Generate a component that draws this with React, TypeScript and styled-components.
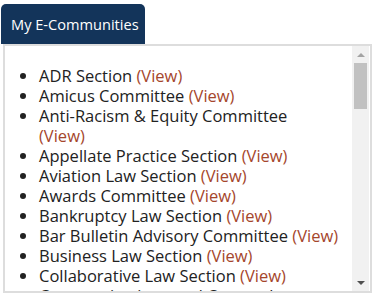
import React from "react";
import styled, {createGlobalStyle} from "styled-components";

type Community = {
    name: string
    viewOnNewLine?: boolean
}

const communities: Community[] = [
    {name: "ADR Section"},
    {name: "Amicus Committee"},
    {name: "Anti-Racism & Equity Committee", viewOnNewLine: true},
    {name: "Appellate Practice Section"},
    {name: "Aviation Law Section"},
    {name: "Awards Committee"},
    {name: "Bankruptcy Law Section"},
    {name: "Bar Bulletin Advisory Committee"},
    {name: "Business Law Section"},
    {name: "Collaborative Law Section"},
    {name: "Communications and Outreach Committee"},
    {name: "Construction Law Section"},
]

export default function App() {
    return (
        <>
            <GlobalStyle />
            <Wrapper>
                <Tab>My E-Communities</Tab>
                <Panel>
                    <ListArea>
                        <List>
                            {communities.map((c) => (
                                <Item key={c.name}>
                                    {c.name} <ViewLink href="#" $block={c.viewOnNewLine}>(View)</ViewLink>
                                </Item>
                            ))}
                        </List>
                    </ListArea>
                    <ScrollBar>
                        <Arrow up />
                        <Track>
                            <Thumb />
                        </Track>
                        <Arrow />
                    </ScrollBar>
                </Panel>
            </Wrapper>
        </>
    )
}

const GlobalStyle = createGlobalStyle`
  body {
    margin: 0;
    background: #fff;
    font-family: "Open Sans", "Liberation Sans", sans-serif;
  }
`

const Wrapper = styled.div`
  padding-top: 4px;
  width: 374px;
`

const Tab = styled.div`
  margin-left: 1px;
  width: 144px;
  height: 40px;
  box-sizing: border-box;
  padding: 10px 0 0 10px;
  background: #13345a;
  border-radius: 5px 5px 0 0;
  color: #fff;
  font-size: 14.6px;
  line-height: 20px;
`

const Panel = styled.div`
  margin-left: 3px;
  width: 369px;
  height: 249px;
  box-sizing: border-box;
  border: 2px solid #ddd;
  display: flex;
  overflow: hidden;
`

const ListArea = styled.div`
  flex: 1;
  overflow: hidden;
`

const List = styled.ul`
  margin: 0;
  padding: 20px 8px 0 34px;
  list-style: disc;
`

const Item = styled.li`
  font-size: 16.5px;
  line-height: 20px;
  color: #222;
`

const ViewLink = styled.a<{$block?: boolean}>`
  display: ${({$block}) => ($block ? 'block' : 'inline')};
  color: #a5462c;
  text-decoration: none;
`

const ScrollBar = styled.div`
  width: 17px;
  margin-right: 1px;
  background: #f1f1f1;
  display: flex;
  flex-direction: column;
`

const Arrow = styled.div<{up?: boolean}>`
  height: 17px;
  display: flex;
  align-items: center;
  justify-content: center;

  &::after {
    content: "";
    border-left: 4px solid transparent;
    border-right: 4px solid transparent;
    ${({up}) => (up ? 'border-bottom: 4px solid #a3a3a3;' : 'border-top: 4px solid #505050;')}
  }
`

const Track = styled.div`
  flex: 1;
`

const Thumb = styled.div`
  margin: 0 2px;
  height: 46px;
  background: #c1c1c1;
`
